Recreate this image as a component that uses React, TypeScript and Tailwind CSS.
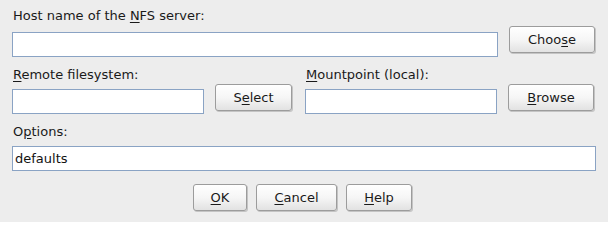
import React from 'react';

const font = { fontFamily: '"DejaVu Sans", Verdana, sans-serif' };

const Btn: React.FC<{ w: string; children: React.ReactNode }> = ({ w, children }) => (
  <button
    className={`${w} h-[27px] shrink-0 rounded-[3px] border border-[#9c9c9c] bg-gradient-to-b from-white via-[#f6f6f6] to-[#e2e2e2] text-[13px] leading-none text-[#1a1a1a] shadow-[1px_1px_0_#c4c4c4]`}
  >
    {children}
  </button>
);

const Field: React.FC<{ w: string; value?: string }> = ({ w, value }) => (
  <input
    readOnly
    value={value ?? ''}
    className={`${w} h-[25px] shrink-0 border border-[#8aa3c4] bg-white pl-[2px] text-[13px] text-[#111] outline-none`}
    style={font}
  />
);

const App: React.FC = () => {
  return (
    <div
      className="h-[222px] w-[608px] overflow-hidden bg-[#ededed] pl-[12px] pt-[8px] text-[13px] leading-[16px] text-[#1a1a1a]"
      style={font}
    >
      {/* Host */}
      <div className="h-[16px] pl-[1px]">
        Host name of the <u className="underline-offset-2">N</u>FS server:
      </div>
      <div className="mt-[2px] flex items-start gap-[11px]">
        <div className="mt-[6px]">
          <Field w="w-[486px]" />
        </div>
        <Btn w="w-[86px]">
          Choo<u className="underline-offset-2">s</u>e
        </Btn>
      </div>

      {/* Remote / mountpoint */}
      <div className="mt-[10px] flex h-[16px]">
        <div className="w-[294px] pl-[1px]">
          <u className="underline-offset-2">R</u>emote filesystem:
        </div>
        <div>
          <u className="underline-offset-2">M</u>ountpoint (local):
        </div>
      </div>
      <div className="mt-[1px] flex items-start">
        <div className="mt-[5px]">
          <Field w="w-[192px]" />
        </div>
        <div className="ml-[11px]">
          <Btn w="w-[77px]">
            S<u className="underline-offset-2">e</u>lect
          </Btn>
        </div>
        <div className="ml-[13px] mt-[5px]">
          <Field w="w-[192px]" />
        </div>
        <div className="ml-[11px]">
          <Btn w="w-[86px]">
            <u className="underline-offset-2">B</u>rowse
          </Btn>
        </div>
      </div>

      {/* Options */}
      <div className="mt-[10px] h-[16px] pl-[1px]">
        O<u className="underline-offset-2">p</u>tions:
      </div>
      <div className="mt-[6px]">
        <Field w="w-[584px]" value="defaults" />
      </div>

      {/* Actions */}
      <div className="mt-[13px] flex gap-[9px] pl-[181px]">
        <Btn w="w-[54px]">
          <u className="underline-offset-2">O</u>K
        </Btn>
        <Btn w="w-[81px]">
          <u className="underline-offset-2">C</u>ancel
        </Btn>
        <Btn w="w-[66px]">
          <u className="underline-offset-2">H</u>elp
        </Btn>
      </div>
    </div>
  );
};

export default App;
